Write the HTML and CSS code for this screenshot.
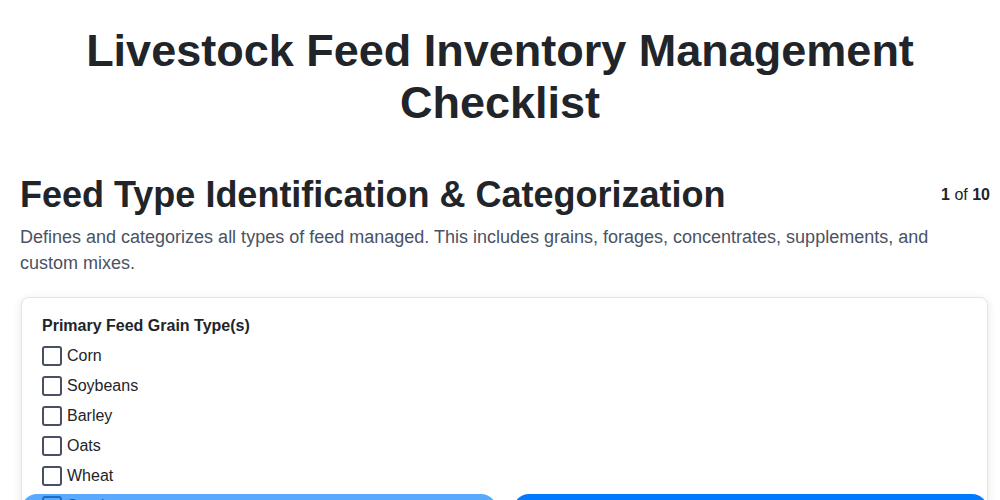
FILE: index.html
```html
<!DOCTYPE html>
<html lang="en">

<head>
    <meta charset="UTF-8">
    <meta name="viewport" content="width=device-width, initial-scale=1.0">
    <title>Livestock Feed Inventory Management Checklist</title>
    <link rel="stylesheet" href="styles.css">
</head>

<body>
    <h1 class="page-title">Livestock Feed Inventory Management Checklist</h1>

    <!-- Secção atual do checklist -->
    <div class="section">
        <div class="section-header">
            <h2>Feed Type Identification &amp; Categorization</h2>
            <div class="counter"><b>1</b> of <b>10</b></div>
        </div>
        <p class="description">Defines and categorizes all types of feed managed. This includes grains, forages,
            concentrates, supplements, and custom mixes.</p>

        <div class="card">
            <div class="field-label">Primary Feed Grain Type(s)</div>
            <label class="option"><input type="checkbox"> Corn</label>
            <label class="option"><input type="checkbox"> Soybeans</label>
            <label class="option"><input type="checkbox"> Barley</label>
            <label class="option"><input type="checkbox"> Oats</label>
            <label class="option"><input type="checkbox"> Wheat</label>
            <label class="option"><input type="checkbox"> Sorghum</label>
            <label class="option"><input type="checkbox"> Rye</label>
            <label class="option"><input type="checkbox"> Other</label>
        </div>
    </div>

    <!-- Navegação -->
    <div class="nav">
        <button class="nav-btn" disabled>Previous</button>
        <button class="nav-btn">Next</button>
    </div>
</body>

</html>
```

FILE: styles.css
```css
body,
html {
    margin: 0;
    padding: 0;
    background-color: #fff;
    font-family: 'Liberation Sans', Arial, sans-serif;
    color: #212529;
}

.page-title {
    margin: 25px 0 46px;
    font-size: 45px;
    line-height: 51.5px;
    text-align: center;
    color: #212529;
}

.section {
    padding: 0 10px 0 20px;
}

.section-header {
    display: flex;
    justify-content: space-between;
    align-items: center;
}

.section-header h2 {
    margin: 0;
    font-size: 36px;
    line-height: 1.15;
}

.counter {
    font-size: 16px;
    color: #212529;
}

.description {
    margin: 9px 0 21px;
    font-size: 18px;
    line-height: 26px;
    color: #4a5263;
}

.card {
    margin: 0 2px 0 1px;
    padding: 19px 20px;
    border: 1px solid #e4e4ec;
    border-radius: 8px;
    box-shadow: 0 2px 10px rgba(0, 0, 0, 0.1);
    background-color: #fff;
}

.field-label {
    font-weight: bold;
    font-size: 16px;
    margin-bottom: 6px;
}

.option {
    display: flex;
    align-items: center;
    padding: 5px 0;
    font-size: 16px;
    line-height: 20px;
}

.option input {
    appearance: none;
    width: 20px;
    height: 20px;
    margin: 0 5px 0 0;
    border: 2px solid #4a5063;
    border-radius: 3px;
    background-color: #fff;
}

.nav {
    position: fixed;
    top: 494px;
    left: 21px;
    right: 12px;
    display: flex;
    gap: 16px;
}

.nav-btn {
    flex: 1;
    height: 48px;
    border: none;
    border-radius: 16px;
    background-color: #007bff;
    color: #fff;
    font-family: 'Liberation Sans', Arial, sans-serif;
    font-size: 16px;
    font-weight: bold;
    cursor: pointer;
}

.nav-btn:disabled {
    opacity: 0.65;
    cursor: default;
}
```
